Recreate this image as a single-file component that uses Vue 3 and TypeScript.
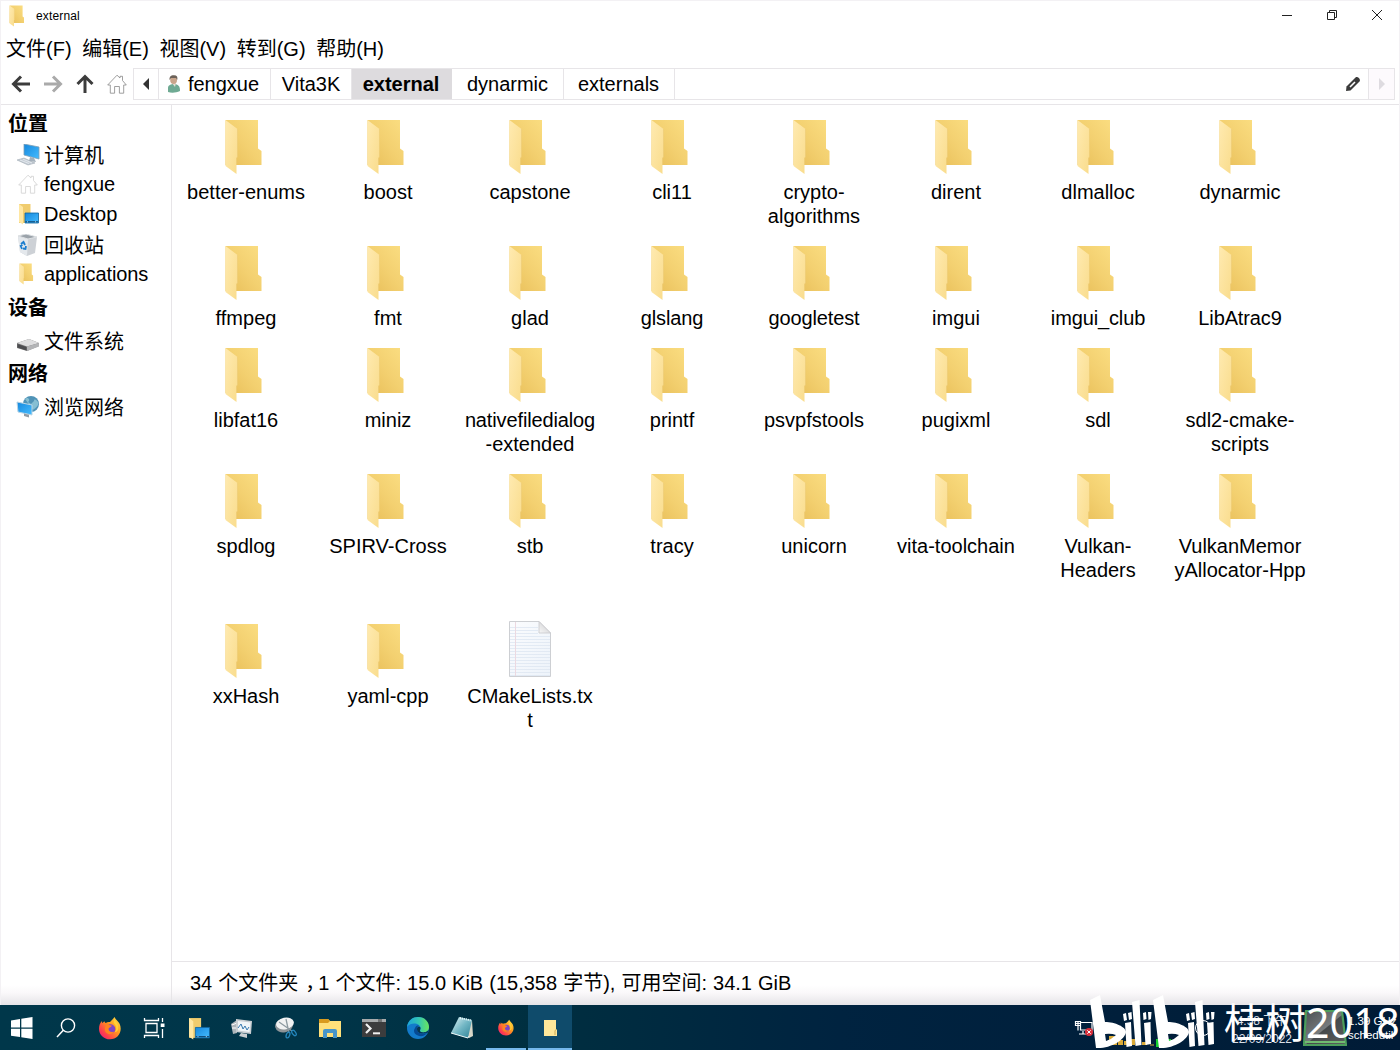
<script setup lang="ts">
interface Entry { lines: string[]; file?: boolean }
interface Place { label: string; height: number; icon?: string }

const menus: string[] = ['文件(F)', '编辑(E)', '视图(V)', '转到(G)', '帮助(H)']

const places: Place[] = [
  { label: '位置', height: 32 },
  { label: '计算机', height: 32, icon: 'computer' },
  { label: 'fengxue', height: 26, icon: 'home' },
  { label: 'Desktop', height: 34, icon: 'desktop' },
  { label: '回收站', height: 28, icon: 'trash' },
  { label: 'applications', height: 30, icon: 'folder' },
  { label: '设备', height: 36 },
  { label: '文件系统', height: 32, icon: 'drive' },
  { label: '网络', height: 32 },
  { label: '浏览网络', height: 36, icon: 'network' },
]

const entries: Entry[] = [
  'better-enums', 'boost', 'capstone', 'cli11', 'crypto-|algorithms', 'dirent', 'dlmalloc', 'dynarmic',
  'ffmpeg', 'fmt', 'glad', 'glslang', 'googletest', 'imgui', 'imgui_club', 'LibAtrac9',
  'libfat16', 'miniz', 'nativefiledialog|-extended', 'printf', 'psvpfstools', 'pugixml', 'sdl', 'sdl2-cmake-|scripts',
  'spdlog', 'SPIRV-Cross', 'stb', 'tracy', 'unicorn', 'vita-toolchain', 'Vulkan-|Headers', 'VulkanMemor|yAllocator-Hpp',
  'xxHash', 'yaml-cpp', 'CMakeLists.tx|t',
].map((s) => ({ lines: s.split('|'), file: s.startsWith('CMake') }))

const tight = new Set<string>(['nativefiledialog', 'LibAtrac9', 'imgui_club', 'googletest', 'glslang', 'applications'])

const tasks: string[] = ['start', 'search', 'firefox', 'taskview', 'desktop', 'monitor', 'snip', 'files', 'terminal', 'edge', 'notes', 'firefox-run', 'folder-run']
const paperLines: number[] = Array.from({ length: 17 }, (_, i) => 7 + i * 3)
const isCjk = (s: string): boolean => /[\u4e00-\u9fff]/.test(s)
</script>

<template>
  <div class="screen">
    <svg class="defs" width="0" height="0" aria-hidden="true">
      <defs>
        <linearGradient id="gBack" x1="0" y1="1" x2="1" y2="0"><stop offset="0" stop-color="#e8be58" /><stop offset=".5" stop-color="#f3d070" /><stop offset="1" stop-color="#fbde82" /></linearGradient>
        <linearGradient id="gFront" x1="0" y1="0" x2="1" y2="1"><stop offset="0" stop-color="#ffeab0" /><stop offset="1" stop-color="#f9dc8c" /></linearGradient>
        <linearGradient id="gPaper" x1="0" y1="0" x2="1" y2="1"><stop offset="0" stop-color="#fbfcfe" /><stop offset="1" stop-color="#edf3fa" /></linearGradient>
        <linearGradient id="gFold" x1="0" y1="1" x2="1" y2="0"><stop offset="0" stop-color="#f7f7f7" /><stop offset="1" stop-color="#c9c9cc" /></linearGradient>
        <linearGradient id="gBlue" x1="0" y1="0" x2="1" y2="1"><stop offset="0" stop-color="#1688dd" /><stop offset="1" stop-color="#45bcff" /></linearGradient>
        <linearGradient id="gFox" x1="1" y1="0" x2="0" y2="1"><stop offset="0" stop-color="#ffe64a" /><stop offset=".4" stop-color="#ff9a1f" /><stop offset=".75" stop-color="#ff3c4e" /><stop offset="1" stop-color="#e31587" /></linearGradient>
        <linearGradient id="gEdge" x1="0" y1="0" x2="1" y2="0"><stop offset="0" stop-color="#1ba4dc" /><stop offset=".55" stop-color="#35c7b1" /><stop offset="1" stop-color="#6ae45c" /></linearGradient>
        <linearGradient id="gNote" x1="0" y1="0" x2="1" y2="1"><stop offset="0" stop-color="#e5f5f7" /><stop offset=".5" stop-color="#73b7c5" /><stop offset="1" stop-color="#2d8297" /></linearGradient>
        <linearGradient id="gChip" x1="0" y1="0" x2="1" y2="1"><stop offset="0" stop-color="#4a4f52" /><stop offset=".5" stop-color="#777b7d" /><stop offset=".52" stop-color="#45494b" /><stop offset="1" stop-color="#5c6061" /></linearGradient>
        <symbol id="folder" viewBox="0 0 40 56">
          <path d="M1.5 1H34V29.5L37.5 32V46H1.5Z" fill="url(#gBack)" />
          <path d="M1.5 1L13.5 10V38L12.5 39V55L1.5 47Z" fill="url(#gFront)" />
          <path d="M13.5 10V38L12.5 39V46" fill="none" stroke="#eac873" stroke-width=".5" />
        </symbol>
        <symbol id="home" viewBox="0 0 20 20">
          <path d="M.7 11L10 1.2L13 4V2.3H15.5V6.5L19.3 11H16.7V19.2H12.4V12.5H7.6V19.2H3.3V11Z" fill="#fff" stroke="currentColor" stroke-width=".8" />
        </symbol>
        <symbol id="desk" viewBox="0 0 22 22">
          <path d="M2 1H13.5V20H2Z" fill="#f0cc6e" /><path d="M2 1L6 4V21.5L2 19Z" fill="#ffe7a2" />
          <path d="M8 10H21.5V20H8Z" fill="url(#gBlue)" stroke="#10669f" stroke-width=".8" />
          <path d="M8.4 18.8H21" stroke="#0b3f68" stroke-width="1" /><path d="M10 18.8H11M18 18.8H19" stroke="#d9f1ff" stroke-width=".8" />
        </symbol>
        <symbol id="fox" viewBox="0 0 24 24">
          <path d="M16.4 1C18 4 20.2 5 21.6 7.8C25 15.3 20.1 23.3 12 23.3C5.8 23.3 1 18.7 1 12.7C1 9.4 2.1 7 4 5L4.3 7.3L6.3 5.3L7.4 7.2C9 6 10.5 5.7 12 6C13.2 4.8 15.2 3 16.4 1Z" fill="url(#gFox)" />
          <circle cx="12.4" cy="13.1" r="4.9" fill="#7d45c7" />
          <path d="M5 7C8 6.1 10.2 7.2 11.3 9L14 9.8C13 11.2 11.5 11.2 10.6 12.6C10.2 15.6 13.5 17 16.2 15.4C15.3 19 8.4 19.5 7 14.8C6.6 12 7 10 8.4 9.4Z" fill="#ff8420" />
          <path d="M15.8 7C19 10 18.8 14.6 16.5 16.3C21.1 16 22 9.7 16.4 2.7Z" fill="#ffcf36" />
        </symbol>
      </defs>
    </svg>

    <main class="window">
      <header class="title">
        <svg class="title-icon" viewBox="0 0 40 56" preserveAspectRatio="none"><use href="#folder" /></svg>
        <span>external</span>
        <div class="controls">
          <svg viewBox="0 0 12 12"><path d="M1 6.5H11" /></svg>
          <svg viewBox="0 0 12 12"><path d="M1.5 3.5H8.5V10.5H1.5ZM3.5 3V1.5H10.5V8.5H9" /></svg>
          <svg viewBox="0 0 12 12"><path d="M1 1L11 11M11 1L1 11" /></svg>
        </div>
      </header>

      <nav class="menu"><span v-for="m in menus" :key="m">{{ m }}</span></nav>

      <div class="toolbar">
        <div class="navs">
          <svg viewBox="0 0 20 20"><path d="M19 10H3M10 2.5L2.5 10L10 17.5" /></svg>
          <svg class="dim" viewBox="0 0 20 20"><path d="M1 10H17M10 2.5L17.5 10L10 17.5" /></svg>
          <svg viewBox="0 0 20 20"><path d="M10 19V3M2.5 10L10 2.5L17.5 10" /></svg>
          <svg class="house" viewBox="0 0 20 20"><use href="#home" /></svg>
        </div>
        <div class="path">
          <span class="crumb tri"><svg viewBox="0 0 8 12"><path d="M7 0V12L1 6Z" fill="#333" /></svg></span>
          <span class="crumb user">
            <svg viewBox="0 0 14 18"><path d="M1 17V13C1 10 4 9 7 9C11 9 13 11 13 16C9 18 4 18 1 17Z" fill="#6faa93" /><path d="M5 8H9L8 12Z" fill="#e6ddd2" /><ellipse cx="6.6" cy="5" rx="3.4" ry="4" fill="#c9a58b" /><path d="M2.6 5C2 1 5 0 7 .3C10 .4 11 2 10.2 5L9 3H4Z" fill="#6c6259" /></svg>fengxue
          </span>
          <span class="crumb vita">Vita3K</span>
          <span class="crumb current">external</span>
          <span class="crumb dyn">dynarmic</span>
          <span class="crumb exts">externals</span>
          <span class="edit"><svg viewBox="0 0 16 16"><path d="M1 15L1.5 10.5L10.5 1.5C12.5 -.3 16.2 3.5 14.5 5.5L5.5 14.5Z" fill="#3b3b3b" /><path d="M5 11L10 6" stroke="#fff" stroke-width="1.6" /></svg></span>
          <span class="next"><svg viewBox="0 0 6 12"><path d="M0 0V12L6 6Z" fill="#dedbe0" /></svg></span>
        </div>
      </div>

      <div class="body">
        <aside class="side">
          <div v-for="p in places" :key="p.label" class="place" :class="{ head: !p.icon }" :style="{ height: p.height + 'px' }">
            <svg v-if="p.icon === 'computer'" class="pi" viewBox="0 0 24 22"><path d="M8 0L23 3V15L8 11Z" fill="url(#gBlue)" stroke="#7f9fb5" stroke-width=".8" /><path d="M14 13L18 14L20 18L13 17Z" fill="#a5b1bc" /><path d="M1 16L8 14L19 19L12 21Z" fill="#c5ccd4" stroke="#95a0aa" stroke-width=".5" /><path d="M4 16L13 19.5M7 15.2L16 19" stroke="#eef3f8" stroke-width=".7" /></svg>
            <svg v-else-if="p.icon === 'home'" class="pi pale" viewBox="-2 0 24 22"><use href="#home" width="20" height="20" y="1" /></svg>
            <svg v-else-if="p.icon === 'desktop'" class="pi" viewBox="-1 0 24 22"><use href="#desk" width="22" height="22" /></svg>
            <svg v-else-if="p.icon === 'trash'" class="pi" viewBox="0 0 24 22"><path d="M2 2L10 0L21 3L19 19L11 22L4 18Z" fill="#cdd1d6" /><path d="M2 2L12 5L11 22L4 18Z" fill="#e4e8ec" /><path d="M2 2L10 0L21 3L12 5Z" fill="#9ba3aa" stroke="#dfe2e5" /><path d="M5 10L7.5 8L9 11M10 12L9.5 15L7 14.5M6 15L4.7 12L6.5 11" fill="none" stroke="#1b7dce" stroke-width="1.8" /></svg>
            <svg v-else-if="p.icon === 'folder'" class="pi" viewBox="0 0 24 22"><svg x="3" y="0" width="15" height="22" viewBox="0 0 40 56" preserveAspectRatio="none"><use href="#folder" /></svg></svg>
            <svg v-else-if="p.icon === 'drive'" class="pi" viewBox="0 0 24 22"><path d="M1 13L13 9L23 13V16L11 21L1 18Z" fill="#777" /><path d="M1 13L13 9L23 13L11 16.5Z" fill="#dededf" /><path d="M11 16.5L23 13V16.5L11 21Z" fill="#b3b4b6" /><path d="M1.5 14L10.5 17V20.5L1.5 17.5Z" fill="#4c4d50" /></svg>
            <svg v-else-if="p.icon === 'network'" class="pi" viewBox="0 0 24 22"><circle cx="15" cy="8" r="8" fill="#4f93b7" /><path d="M9 3C12 0 15 4 12 6L15 8L18 5C18 2 21 4 22.5 7C22 11 19 12 17 14" fill="#86bfd3" /><path d="M1 6L16 9V19L2 16Z" fill="url(#gBlue)" stroke="#b9d5e6" /><path d="M8 17.5V20L13 21.5V18.8Z" fill="#929ca5" /></svg>
            <span :class="{ cjk: isCjk(p.label), tight: tight.has(p.label) }">{{ p.label }}</span>
          </div>
        </aside>

        <section class="content">
          <div class="grid">
            <div v-for="e in entries" :key="e.lines[0]" class="entry">
              <svg v-if="e.file" class="paper" viewBox="0 0 44 58">
                <path d="M1.5 1.5H31L42.5 13V56.5H1.5Z" fill="url(#gPaper)" stroke="#cdcfd3" />
                <path v-for="y in paperLines" :key="y" :d="`M2 ${y}.5H${y < 14 ? 30 : 42}`" stroke="#dde6f1" stroke-width=".8" />
                <path d="M7.5 2V56" stroke="#ecd9e1" /><path d="M31 1.5L42.5 13H31Z" fill="url(#gFold)" stroke="#c8c8cb" stroke-width=".8" />
              </svg>
              <svg v-else class="folder" viewBox="0 0 40 56"><use href="#folder" /></svg>
              <div v-for="l in e.lines" :key="l" class="label" :class="{ tight: tight.has(l) }">{{ l }}</div>
            </div>
          </div>
          <footer class="status">34 个文件夹<span class="comma">，</span>1 个文件: 15.0 KiB (15,358 字节), 可用空间: 34.1 GiB</footer>
        </section>
      </div>
    </main>

    <footer class="taskbar">
      <div v-for="t in tasks" :key="t" class="task" :class="t">
        <svg v-if="t === 'start'" viewBox="0 0 24 24"><path d="M1 4.5L10 3V11.5H1ZM11.3 2.8L22.5 1V11.5H11.3ZM1 12.7H10V21L1 19.7ZM11.3 12.7H22.5V23L11.3 21.3Z" fill="#fff" /></svg>
        <svg v-else-if="t === 'search'" viewBox="0 0 24 24"><circle cx="14" cy="9.5" r="6.6" fill="none" stroke="#fff" stroke-width="1.4" /><path d="M9.3 14.3L3 21" stroke="#fff" stroke-width="1.5" /></svg>
        <svg v-else-if="t === 'firefox'" viewBox="0 0 24 24"><use href="#fox" /></svg>
        <svg v-else-if="t === 'firefox-run'" viewBox="0 0 24 24"><use href="#fox" x="3.5" y="4" width="17" height="17" /></svg>
        <svg v-else-if="t === 'taskview'" viewBox="0 0 24 24"><path d="M2.5 2V4.5H16.5V2M2.5 22V19.5H16.5V22M4 7.5H15V16.5H4ZM20.5 2V6M20.5 13V22" fill="none" stroke="#fff" stroke-width="1.3" /><path d="M18.7 7.5H22.5V11H18.7Z" fill="#fff" /></svg>
        <svg v-else-if="t === 'desktop'" viewBox="0 0 24 24"><use href="#desk" x="1" y="1" width="23" height="23" /></svg>
        <svg v-else-if="t === 'monitor'" viewBox="0 0 24 24"><path d="M1 8L7 4V17L3 18Z" fill="#aeb6bb" /><path d="M2 9L7 7M2 12H7" stroke="#fff" /><path d="M6 3L22 5L21 18L6 16Z" fill="#c8ced2" /><path d="M8 5L20.5 6.5L19.5 16L8 14.5Z" fill="#f0f5f8" /><path d="M8 12L11 8L13 13L15 10L17 14L19 11" fill="none" stroke="#3679b0" /><path d="M11 17L17 18V22L9 20Z" fill="#c9ced1" /></svg>
        <svg v-else-if="t === 'snip'" viewBox="0 0 24 24"><ellipse cx="10" cy="9.5" rx="9" ry="6.8" fill="#8d9498" transform="rotate(-12 10 9.5)" /><ellipse cx="11" cy="7.5" rx="9" ry="5.8" fill="#f1f2f3" transform="rotate(-12 11 7.5)" /><path d="M5 6L18 15M12 3L15 17" stroke="#8d9aa1" stroke-width="1.3" /><ellipse cx="14" cy="19" rx="1.7" ry="3" fill="none" stroke="#2386bd" stroke-width="1.3" transform="rotate(20 14 19)" /><ellipse cx="20" cy="17" rx="1.7" ry="3" fill="none" stroke="#2386bd" stroke-width="1.3" transform="rotate(-35 20 17)" /></svg>
        <svg v-else-if="t === 'files'" viewBox="0 0 24 24"><path d="M1 3H10L12 5H23V21H1Z" fill="#ffe07a" /><path d="M1 3H10L12 5L10 7H1Z" fill="#d99b1e" /><path d="M5 22V15Q5 13 7 13H17Q19 13 19 15V22H15V17H9V22Z" fill="#4795c9" /></svg>
        <svg v-else-if="t === 'terminal'" viewBox="0 0 24 24"><path d="M0 3H24V21H0Z" fill="#3c3c3d" /><path d="M0 3H24V6H0Z" fill="#a7aaab" /><path d="M16 3H20V6H16Z" fill="#727576" /><path d="M4 8L8.5 12.5L4 17" fill="none" stroke="#f0f0f0" stroke-width="2.2" /><path d="M11 17.3H18" stroke="#f0f0f0" stroke-width="2" /></svg>
        <svg v-else-if="t === 'edge'" viewBox="0 0 24 24"><circle cx="12" cy="12" r="11" fill="#137bcb" /><path d="M1 11C2 4 7 1 12 1C19 1 23 6 23 11C23 16 18 17 15 16C13 15 14.5 14 14.5 12C14.5 8 6 5 1 11Z" fill="url(#gEdge)" /><path d="M9 12C6 16 10 21 17 20C19 19 20.5 18 21 17C16 19 11 17 11 13C11 11 12 10 13 10C11 9 10 10 9 12Z" fill="#064a93" /><path d="M11 13C11 17 16 19 22 16.5L23 12C22.7 16 18 17.2 15 16C13 15 14.5 14 14.5 12C14.5 10.5 11 10 11 13Z" fill="#053650" /></svg>
        <svg v-else-if="t === 'notes'" viewBox="0 0 24 24"><path d="M9 2L22 4L23 20L19 22Z" fill="#d8d7c8" /><path d="M9 1L22 4L18 22L1 17Z" fill="url(#gNote)" /><path d="M1 17L18 22L19 20" fill="none" stroke="#f3fbfc" /><path d="M10 2L21 4.5" stroke="#e8f5f7" stroke-dasharray="1 1" stroke-width="2" /></svg>
        <svg v-else viewBox="0 0 24 24"><path d="M6 5H18V14L19 15V21H6Z" fill="#ffe79a" /><path d="M17 20V15.5L18.5 14.5" stroke="#caa957" fill="none" /></svg>
      </div>
      <div class="tray">
        <svg class="net" viewBox="0 0 20 18"><path d="M1.5 2.5H6.5V6.5H1.5ZM4 2.5V11.5M1.5 4.5H6.5M6.5 3.5H18V11H6.5V7M5 15H13M9 12V15" fill="none" stroke="#fff" stroke-width="1.2" /><circle cx="15" cy="13" r="4" fill="#d9303c" /><path d="M13.3 11.3L16.7 14.7M16.7 11.3L13.3 14.7" stroke="#fff" /></svg>
        <svg class="meters" viewBox="0 0 68 12"><path d="M1 0H6L9 3V9H1ZM10 4H15V9H10ZM16 5H21V9H16ZM22 3H27V9H22ZM28 5H33V9H28ZM34 6H39V9H34Z" fill="#d9aa38" /><path d="M42 9H46" stroke="#d9aa38" /><path d="M48 3H52V11H48ZM53 0H57V11H53ZM58 3H63V8H58Z" fill="#19d331" /></svg>
        <svg class="ring" viewBox="0 0 18 18"><circle cx="9" cy="9" r="7.5" fill="none" stroke="#fff" /></svg>
        <div class="clock"><span>4:58 下午</span><span>22/09/2022</span></div>
        <svg class="chip" viewBox="0 0 44 36"><path d="M3 1H39L43 35H1Z" fill="url(#gChip)" stroke="#4c9d5b" stroke-width="2.2" /><path d="M2 32H42" stroke="#70bc70" stroke-width="2" /></svg>
        <div class="cpu"><span>1.39 GHz</span><span>schedutil</span></div>
      </div>
    </footer>

    <div class="mark">
      <svg viewBox="0 0 126 56">
        <g id="bi" fill="#fff">
          <path d="M0 6L10 1L15 28C25 28 36 33 36 38C35 46 20 55 6 54ZM15 40L16 47Q22 45 26 41Q21 39 15 40Z" fill-rule="evenodd" />
          <path d="M33 20L36 19L37 26L34 27ZM38 19L41.500 18L42 25L39 26ZM35 29L41 28L42 52L36.500 53ZM42 8L49.500 6L51.500 51L45.500 52ZM53 19L56 18L56.500 25L53.500 26ZM58 18L61.500 18L61 25L58.500 26ZM54 29L60.500 28L61 50L55.500 51Z" />
        </g>
        <use href="#bi" x="63" />
      </svg>
      <span>桂树2018</span>
    </div>
  </div>
</template>

<style>
body { overflow: hidden; }
</style>

<style scoped>
.screen { position: relative; width: 1400px; height: 1050px; overflow: hidden; display: flex; flex-direction: column; background: #fff; color: #000; font: 20px/24px "Liberation Sans", "Noto Sans CJK SC", sans-serif; }
.defs { position: absolute; }
.window { height: 1005px; display: flex; flex-direction: column; box-sizing: border-box; border: 1px solid #f3f1f4; border-bottom: 0; background: linear-gradient(#fff 0 984px, #faf8fa 992px, #e5e4e8 1004px); }
.title { height: 30px; display: flex; align-items: center; font-size: 12px; letter-spacing: .15px; }
.title-icon { width: 16px; height: 22px; margin: 0 11px 0 8px; }
.controls { margin-left: auto; display: flex; gap: 33px; margin: 0 16px 2px auto; }
.controls svg { width: 12px; height: 12px; fill: none; stroke: #222; stroke-width: 1; }
.menu { height: 37px; display: flex; align-items: center; gap: 10.6px; padding: 0 0 2px 5px; box-sizing: border-box; white-space: nowrap; }
.toolbar { height: 37px; box-sizing: border-box; border-bottom: 1px solid #e7e5e8; display: flex; }
.navs { width: 132px; height: 32px; box-sizing: border-box; display: flex; align-items: center; gap: 12px; padding-left: 10px; }
.navs svg { width: 20px; height: 20px; fill: none; stroke: #3c3c3c; stroke-width: 3; }
.navs .dim { stroke: #aaa; }
.navs .house { stroke: none; color: #888; }
.path { width: 1262px; height: 32px; box-sizing: border-box; border: 1px solid #e7e5e8; display: flex; }
.crumb { box-sizing: border-box; height: 30px; border-right: 1px solid #e7e5e8; display: flex; align-items: center; justify-content: center; line-height: 30px; white-space: nowrap; }
.tri { width: 25px; }
.tri svg { width: 8px; height: 12px; }
.user { width: 112px; gap: 7px; padding-right: 3px; }
.user svg { width: 14px; height: 18px; }
.vita { width: 81px; }
.current { width: 100px; background: #dddbde; font-weight: bold; border-right: 0; padding-right: 2px; }
.dyn { width: 112px; }
.exts { width: 111px; padding-right: 1px; }
.edit { margin-left: auto; width: 32px; display: flex; align-items: center; border-right: 1px solid #e7e5e8; box-sizing: border-box; padding-left: 8px; }
.edit svg { width: 16px; height: 16px; }
.next { width: 25px; display: flex; align-items: center; justify-content: center; background: #fdfafd; }
.next svg { width: 6px; height: 12px; }
.body { flex: 1; display: flex; min-height: 0; }
.side { width: 171px; box-sizing: border-box; border-right: 1px solid #e7e5e8; padding-top: 2px; }
.place { display: flex; align-items: center; padding-left: 15px; white-space: nowrap; }
.place.head { padding-left: 7px; font-weight: bold; }
.cjk { padding-top: 2px; }
.tight { letter-spacing: -.13px; }
.pi { width: 24px; height: 22px; margin-right: 4px; flex: none; }
.pale { color: #d0d0d0; }
.content { flex: 1; display: flex; flex-direction: column; }
.grid { flex: 1; display: grid; grid-template-columns: repeat(8, 142px); grid-template-rows: 126px 102px 126px 150px 126px; align-content: start; padding: 10px 0 0 3px; }
.entry { display: flex; flex-direction: column; align-items: center; }
.folder { width: 40px; height: 56px; margin: 4px 4px 5px 0; }
.paper { width: 44px; height: 58px; margin: 1px 0 6px 0; }
.label { height: 24px; line-height: 24px; white-space: nowrap; }
.status { height: 44px; line-height: 43px; box-sizing: border-box; border-top: 1px solid #e7e5e8; padding-left: 18px; white-space: nowrap; word-spacing: .5px; }
.comma { display: inline-block; width: 13px; padding-left: 7px; white-space: nowrap; }
.taskbar { height: 45px; display: flex; background: linear-gradient(90deg, #00374a 0, #003549 22%, #002f40 38%, #002340 60%, #001b36 100%); }
.task { width: 44px; height: 45px; box-sizing: border-box; display: flex; align-items: center; justify-content: center; }
.task svg { width: 24px; height: 24px; }
.firefox-run { border-bottom: 2px solid #76b9ed; width: 40px; margin: 0 2px; }
.folder-run { background: #0f4b6b; border-bottom: 2px solid #76b9ed; }
.tray { margin-left: auto; width: 328px; display: flex; align-items: center; font: 12px/18px "Liberation Sans", "Noto Sans CJK SC", sans-serif; color: #fff; white-space: nowrap; }
.net { width: 20px; height: 18px; margin-left: 2px; flex: none; }
.meters { width: 68px; height: 12px; margin: 28px 0 0 14px; flex: none; }
.ring { width: 18px; height: 18px; margin: 0 9px 0 18px; flex: none; }
.clock { width: 82px; display: flex; flex-direction: column; text-align: center; color: #d8dfe7; padding-top: 4px; flex: none; }
.chip { width: 44px; height: 36px; flex: none; }
.cpu { display: flex; flex-direction: column; line-height: 14px; margin-left: 1px; font-size: 11.5px; }
.mark { position: absolute; left: 1090px; top: 994px; display: flex; color: #fff; font: 41px/56px "Noto Sans", "Noto Sans CJK SC", sans-serif; white-space: nowrap; }
.mark svg { width: 126px; height: 56px; margin-right: 8px; }
</style>
